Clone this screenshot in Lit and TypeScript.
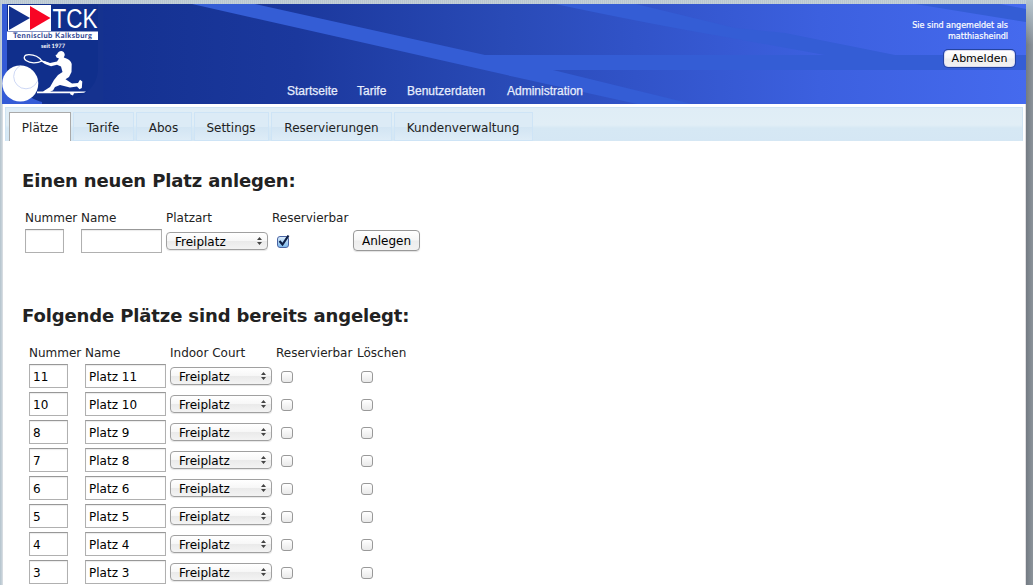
import { LitElement, html, css, svg } from "lit";
import { customElement } from "lit/decorators.js";

const courts = [
  ["11", "Platz 11"], ["10", "Platz 10"], ["8", "Platz 9"], ["7", "Platz 8"],
  ["6", "Platz 6"], ["5", "Platz 5"], ["4", "Platz 4"], ["3", "Platz 3"],
];

const stripes = svg`
  <defs>
    <linearGradient id="sky" gradientUnits="userSpaceOnUse" x1="0" x2="1025" y1="0" y2="0">
      <stop offset="0.08" stop-color="#13308f"/>
      <stop offset="0.29" stop-color="#1b389d"/>
      <stop offset="0.49" stop-color="#294ab6"/>
      <stop offset="0.62" stop-color="#3153c8"/>
      <stop offset="0.8" stop-color="#3c60df"/>
      <stop offset="1" stop-color="#456aee"/>
    </linearGradient>
    <clipPath id="ball"><circle cx="20.3" cy="83.5" r="18"/></clipPath>
  </defs>
  <rect x="2" y="4" width="1024" height="100" fill="url(#sky)"/>
  <g fill="#345dd5">
    <path d="M192 4H255L485 55H825L720 36Q650 24 555 4H636L735 28L785 33L895 55H1026V70H553L692 104H637L515 77Z"/>
    <path d="M915 4H1000L1026 9V22Z"/>
  </g>`;

const logo = svg`
  <rect x="2" y="4" width="40" height="100" fill="#345bd6"/>
  <path d="M7 4H99V104H51Q38 102 30 97L7 85Z" fill="#102f8c"/>
  <path d="M98 70Q96 99 53 104H103V4H98Z" fill="#15328f"/>
  <rect x="8" y="5" width="43" height="26" fill="#fff"/>
  <path d="M9 6L30 18L9 30Z" fill="#12308c"/>
  <path d="M30 6L50.5 18L30 30Z" fill="#f80524"/>
  <text x="52.5" y="28" textLength="45" lengthAdjust="spacingAndGlyphs" font-family="Liberation Sans, sans-serif" font-size="27" fill="#fff">TCK</text>
  <rect x="7" y="31.5" width="91" height="8.5" fill="#fff"/>
  <text x="13" y="38.3" textLength="79" text-rendering="geometricPrecision" font-family="Lato, sans-serif" font-weight="700" font-size="7.5" fill="#24398c">Tennisclub Kalksburg</text>
  <text x="41" y="47.6" textLength="24" lengthAdjust="spacingAndGlyphs" text-rendering="geometricPrecision" font-family="Lato, sans-serif" font-weight="700" font-size="6" fill="#fff">seit 1977</text>
  <path d="M42 61C39 57 34 54.8 29 54.7C24 54.6 22.8 58 26 60.5C30 63.5 37 63.5 42 61L50 64" fill="none" stroke="#fff" stroke-width="1.2"/>
  <path d="M40 60.5L45 61.2L50 63L57 61.5L59 58.5L56.5 57.5L55.5 55L57 54.5Q58 51 61.5 51Q64.5 51.5 64.8 55L63.8 57.5L67 58.7Q71 60.5 71.7 64L71.5 72L69 77L65.5 79.2L72 83.5L78 83L80 79.8L82.3 81.5L81.8 88L79.5 89.2L77 86.5L70 87.5L60 85L55 87L53 90.5L50 91.5H86L84 92.7L74 93.2L73 95.5L70.5 94.5L70 93.2H37V91.5H43L50 87L54 80L58 75L62.5 72L61 66.5L57 64.7L51 66.2L45 64Z" fill="#fff"/>
  <circle cx="20.3" cy="83.5" r="18" fill="#fff"/>
  <circle cx="26" cy="76.5" r="12.3" fill="none" stroke="#c1cef3" stroke-width=".8" clip-path="url(#ball)"/>`;

@customElement("app-root")
export class AppRoot extends LitElement {
  static styles = css`
    :host { display: block; }
    * { box-sizing: border-box; }
    .page {
      width: 1033px; height: 585px; overflow: hidden; padding: 4px 7px 0 2px;
      font: 12px/16px "DejaVu Sans", Verdana, sans-serif; color: #222;
      background:
        linear-gradient(#b7c6cf 0, transparent 45px) right / 7px 100% no-repeat,
        linear-gradient(90deg, #737b83, #8c949b) right / 7px 100% no-repeat,
        repeating-linear-gradient(90deg, #b9c7d0 0 1px, #c4d0d8 1px 2px);
    }
    .sheet { height: 581px; background: #fff; border-right: 1px solid #e2dfe2; border-left: 1px solid #d6dbe0; width: 1024px; }
    .header { display: grid; height: 100px; width: 1024px; margin-left: -1px; }
    .header > * { grid-area: 1 / 1; }
    .art { width: 1024px; height: 100px; display: block; }
    .nav { display: flex; align-self: end; padding: 0 0 5px 285px; color: #e6edfc;
      font: 12px/16px "Liberation Sans", Arial, sans-serif; -webkit-text-stroke: .25px #e6edfc; }
    .nav span { width: 50px; white-space: nowrap; }
    .nav span:nth-child(1) { width: 70px; }
    .nav span:nth-child(3) { width: 100px; }
    .login { justify-self: end; display: flex; flex-direction: column; align-items: flex-end; padding: 16px 11px 0 0; color: #fff; }
    .who { font-size: 8px; line-height: 11px; text-align: right; padding-right: 7px; -webkit-text-stroke: .2px #fff; }
    .btn { color: #000; border: 1px solid #999; border-radius: 4px; height: 21px; width: 67px; text-align: center; line-height: 20px;
      background: linear-gradient(#fff, #f6f6f6 48%, #ededed 52%, #f2f2f2); box-shadow: 0 1px 1px rgba(0,0,0,.12); }
    .create .btn { margin-bottom: 2px; }
    .logout { width: 71px; height: 17px; font-size: 11px; line-height: 16px; margin-top: 8px; border-color: #dde; box-shadow: 0 0 0 1px #2544a0; }
    .tabs { display: flex; gap: 2px; width: 1018px; height: 34px; margin: 3px 0 0 2px; padding: 5px 0 0 3px;
      background: linear-gradient(#dfedf6 0, #e1eef6 17px, #d6e8f4 20px, #d5e7f4); border: solid #cfe3f3; border-width: 1px 1px 0; }
    .tab { margin-top: -1px; height: 29px; line-height: 30px; text-align: center; border: 1px solid #cee4f6; white-space: nowrap;
      background: linear-gradient(#dcebf6 50%, #d2e5f3 52%, #deecf7); color: #222; }
    .t0 { width: 62px; background: #fff; border: 1px solid #aaa; border-bottom: 0; }
    .t1 { width: 61px; } .t2 { width: 56px; } .t3 { width: 75px; } .t4 { width: 121px; } .t5 { width: 139px; }
    .t1, .t2, .t3, .t5 { padding-right: 1px; }
    .content { padding: 27px 0 0 19px; }
    h2 { font-size: 18px; line-height: 26px; margin: 0; white-space: nowrap; letter-spacing: -.13px; }
    .grid { display: grid; grid-template-columns: 56px 85px 106px 81px 90px; align-items: center; }
    .grid span { white-space: nowrap; }
    .create { padding: 15px 0 0 3px; grid-template-rows: 17px 30px; }
    .list { padding: 15px 0 0 7px; grid-template-rows: 18px; grid-auto-rows: 28px; }
    .second { margin-top: 47px; }
    .field { height: 24px; width: 39px; border: 1px solid #b0b0b0; border-top-color: #989898; color: #000; line-height: 24px; padding-left: 3px;
      background: #fff; box-shadow: inset 0 1px 1px #ececec; white-space: nowrap; }
    .name { width: 81px; }
    .select { display: flex; justify-content: space-between; align-items: center; width: 102px; height: 18px; color: #000; padding: 1px 5px 0 8px;
      border: 1px solid #a0a0a0; border-radius: 4px; background: linear-gradient(#fff, #f7f7f7 48%, #eaeaea 52%, #f3f3f3); box-shadow: 0 1px 1px rgba(0,0,0,.1); }
    .select svg { width: 5px; height: 8px; margin-top: -2px; }
    .check { width: 12px; height: 12px; border: 1px solid #999; border-radius: 3px; margin: 2px 0 0 5px; background: linear-gradient(#fff, #e9e9e9); }
    .loesch { margin-left: 4px; }
    .on { border-color: #4a64a4; background: linear-gradient(#d9ebfa, #7db9ec); }
    .on svg { display: block; width: 14px; height: 13px; margin: -3px 0 0 -1px; overflow: visible; }
  `;

  private select() {
    return html`<div class="select"><span>Freiplatz</span><svg viewBox="0 0 5 8"><path d="M0 3L2.5 0L5 3ZM0 5H5L2.5 8Z" fill="#444"/></svg></div>`;
  }

  render() {
    const tabs = ["Plätze", "Tarife", "Abos", "Settings", "Reservierungen", "Kundenverwaltung"];
    return html`<div class="page"><div class="sheet">
      <div class="header">
        <svg class="art" viewBox="2 4 1024 100">${stripes}${logo}</svg>
        <div class="nav"><span>Startseite</span><span>Tarife</span><span>Benutzerdaten</span><span>Administration</span></div>
        <div class="login"><div class="who">Sie sind angemeldet als<br>matthiasheindl</div><div class="btn logout">Abmelden</div></div>
      </div>
      <div class="tabs">${tabs.map((t, i) => html`<div class="tab t${i}">${t}</div>`)}</div>
      <div class="content">
        <h2>Einen neuen Platz anlegen:</h2>
        <div class="grid create">
          <span>Nummer</span><span>Name</span><span>Platzart</span><span>Reservierbar</span><span></span>
          <div class="field"></div><div class="field name"></div>${this.select()}
          <div class="check on"><svg viewBox="0 0 14 13"><path d="M2.5 7L5.5 10.5L11.5 1.5" fill="none" stroke="#0c1e45" stroke-width="2.2"/></svg></div>
          <div class="btn">Anlegen</div>
        </div>
        <h2 class="second">Folgende Plätze sind bereits angelegt:</h2>
        <div class="grid list">
          <span>Nummer</span><span>Name</span><span>Indoor Court</span><span>Reservierbar</span><span>Löschen</span>
          ${courts.map(([n, name]) => html`
            <div class="field">${n}</div><div class="field name">${name}</div>${this.select()}
            <div class="check"></div><div class="check loesch"></div>`)}
        </div>
      </div>
    </div></div>`;
  }
}
